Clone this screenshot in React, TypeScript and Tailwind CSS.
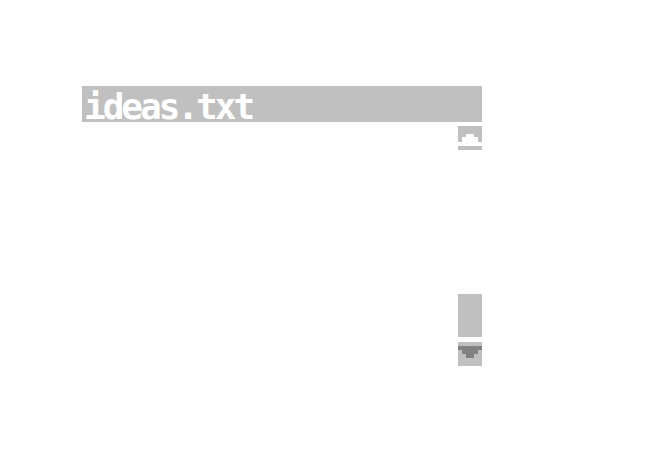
import React from 'react';

function UpButton() {
  return (
    <svg width="24" height="16" viewBox="0 0 24 16" className="block" shapeRendering="crispEdges">
      <rect x="0" y="0" width="24" height="16" fill="#c0c0c0" />
      <rect x="8" y="8" width="8" height="8" fill="#ffffff" />
      <rect x="4" y="11" width="16" height="5" fill="#ffffff" />
    </svg>
  );
}

function DownButton() {
  return (
    <svg width="24" height="24" viewBox="0 0 24 24" className="block" shapeRendering="crispEdges">
      <rect x="0" y="0" width="24" height="24" fill="#c0c0c0" />
      <rect x="0" y="4" width="24" height="4" fill="#808080" />
      <rect x="4" y="8" width="16" height="4" fill="#808080" />
      <rect x="8" y="12" width="8" height="4" fill="#808080" />
    </svg>
  );
}

export default function App() {
  return (
    <div className="w-[650px] h-[450px] bg-white pt-[86px] pl-[82px]">
      <div className="w-[400px] flex flex-col">
        <div className="h-[36px] bg-[#c0c0c0] pl-[2px] pt-[5px]">
          <span
            className="block text-white font-bold text-[36px] leading-[31px] tracking-[-3px] whitespace-nowrap"
            style={{ fontFamily: '"DejaVu Sans Mono", monospace' }}
          >
            ideas.txt
          </span>
        </div>
        <div className="flex h-[244px]">
          <div className="flex-1" />
          <div className="w-[24px] flex flex-col pt-[4px]">
            <UpButton />
            <div className="h-[4px] mt-[4px] bg-[#c0c0c0]" />
            <div className="flex-1" />
            <div className="h-[43px] bg-[#c0c0c0]" />
            <div className="mt-[5px]">
              <DownButton />
            </div>
          </div>
        </div>
      </div>
    </div>
  );
}
